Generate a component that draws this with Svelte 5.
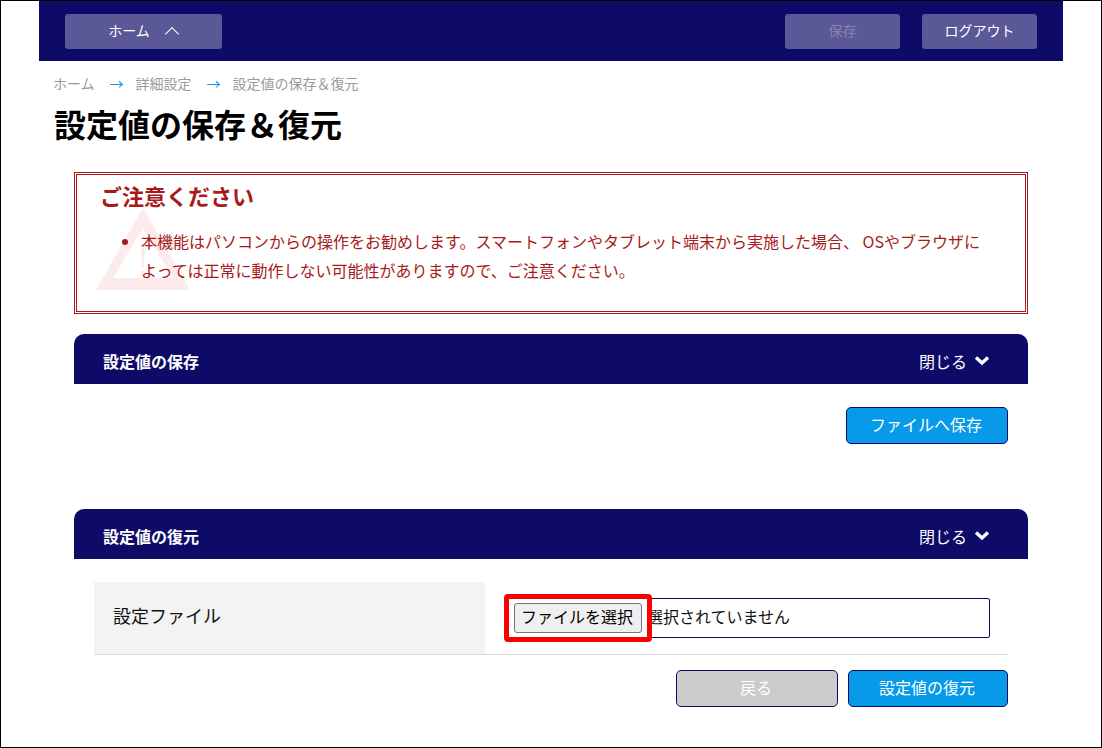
<script>
    let crumbs = ["ホーム", "詳細設定", "設定値の保存＆復元"];
</script>

<div class="frame">
    <div class="page">
        <header>
            <button class="nav home">ホーム<span class="up"></span></button>
            <div class="nav_right">
                <button class="nav disabled">保存</button>
                <button class="nav">ログアウト</button>
            </div>
        </header>

        <nav class="crumbs">
            {#each crumbs as crumb, index}
                {#if index > 0}<span class="arrow">→</span>{/if}
                <span>{crumb}</span>
            {/each}
        </nav>

        <h1>設定値の保存＆復元</h1>

        <div class="content">
            <section class="notice">
                <svg class="warn" width="94" height="82" viewBox="0 0 94 82">
                    <path fill-rule="evenodd" d="M47 0 L94 82 L0 82 Z M47 20 L17 70 L77 70 Z" fill="#fdeaea"/>
                    <path d="M44.5 37 L49 37 L47.6 60 L46 60 Z M45 63 H48.5 V68 H45 Z" fill="#fdeaea"/>
                </svg>
                <h2>ご注意ください</h2>
                <ul>
                    <li>本機能はパソコンからの操作をお勧めします。スマートフォンやタブレット端末から実施した場合、 OSやブラウザによっては正常に動作しない可能性がありますので、ご注意ください。</li>
                </ul>
            </section>

            <section class="panel save">
                <div class="panel_head">
                    <strong>設定値の保存</strong>
                    <span class="toggle">閉じる
                        <svg width="16" height="11" viewBox="0 0 16 11"><path d="M2 2.5 L8 8 L14 2.5" fill="none" stroke="#fff" stroke-width="3.4"/></svg>
                    </span>
                </div>
                <div class="actions first">
                    <button class="action">ファイルへ保存</button>
                </div>
            </section>

            <section class="panel">
                <div class="panel_head">
                    <strong>設定値の復元</strong>
                    <span class="toggle">閉じる
                        <svg width="16" height="11" viewBox="0 0 16 11"><path d="M2 2.5 L8 8 L14 2.5" fill="none" stroke="#fff" stroke-width="3.4"/></svg>
                    </span>
                </div>
                <div class="row">
                    <div class="label">設定ファイル</div>
                    <div class="value">
                        <div class="file">
                            <button class="choose">ファイルを選択</button>
                            <span class="file_text">選択されていません</span>
                            <span class="highlight"></span>
                        </div>
                    </div>
                </div>
                <div class="actions">
                    <button class="action back">戻る</button>
                    <button class="action">設定値の復元</button>
                </div>
            </section>
        </div>
    </div>
</div>

<style>
    :global(body) {
        background: white;
    }

    .frame {
        box-sizing: border-box;
        width: 1102px;
        height: 748px;
        border: 1px solid black;
        overflow: hidden;
        background: white;
        font-family: "Noto Sans CJK JP", "Liberation Sans", sans-serif;
    }

    .page {
        width: 1024px;
        margin-left: 38px;
    }

    header {
        display: flex;
        justify-content: space-between;
        align-items: center;
        height: 60px;
        padding: 0 26px;
        box-sizing: border-box;
        background: #0e0b68;
    }

    .nav_right {
        display: flex;
        gap: 22px;
    }

    button {
        font-family: inherit;
        cursor: pointer;
    }

    .nav {
        width: 115px;
        height: 35px;
        padding: 0 0 2px;
        border: none;
        border-radius: 3px;
        background: #5a5896;
        color: white;
        font-size: 14px;
    }

    .home {
        width: 157px;
    }

    .up {
        display: inline-block;
        width: 10px;
        height: 10px;
        margin: 0 2px 0 17px;
        box-sizing: border-box;
        border-left: 1.5px solid white;
        border-top: 1.5px solid white;
        transform: translateY(3px) rotate(45deg);
    }

    .disabled {
        color: #8583ae;
    }

    .crumbs {
        display: flex;
        align-items: center;
        height: 20px;
        margin-top: 12px;
        padding-left: 14px;
        color: #9a9a9a;
        font-size: 14px;
    }

    .crumbs span {
        line-height: 20px;
    }

    .arrow {
        margin: 0 12px 0 15px;
        color: #1b95e6;
        font-size: 14px;
    }

    h1 {
        margin: 8px 0 0 15px;
        height: 44px;
        font-size: 32px;
        line-height: 44px;
        font-weight: 700;
        color: black;
    }

    .content {
        padding: 27px 35px 0;
    }

    .notice {
        position: relative;
        box-sizing: border-box;
        height: 142px;
        padding: 6px 40px 0 23px;
        border: 3px double #a81a1a;
        color: #a81a1a;
    }

    .warn {
        position: absolute;
        left: 19px;
        top: 33px;
    }

    .notice h2 {
        position: relative;
        margin: 0;
        font-size: 22px;
        line-height: 28px;
        font-weight: 700;
    }

    .notice ul {
        position: relative;
        margin: 18px 0 0;
        padding-left: 41px;
        font-size: 16px;
        line-height: 28.5px;
    }

    .panel_head {
        display: flex;
        justify-content: space-between;
        align-items: center;
        height: 50px;
        padding: 3px 38px 0 29px;
        box-sizing: border-box;
        border-radius: 10px 10px 0 0;
        background: #0e0b68;
        color: white;
        font-size: 16px;
    }

    .panel_head strong {
        font-size: 16px;
    }

    .toggle {
        display: flex;
        align-items: center;
        gap: 7px;
    }

    .save {
        height: 175px;
        margin-top: 20px;
    }

    .actions {
        display: flex;
        justify-content: flex-end;
        gap: 10px;
        margin: 15px 20px 0;
    }

    .first {
        margin-top: 23px;
    }

    .action {
        width: 162px;
        height: 37px;
        padding: 0 2px 4px 0;
        border: 1px solid #0e0b68;
        border-radius: 5px;
        background: #079ae8;
        color: white;
        font-size: 16px;
    }

    .action:last-child {
        width: 160px;
    }

    .first .action:last-child {
        width: 162px;
    }

    .back {
        background: #cbcbcb;
    }

    .row {
        display: flex;
        height: 73px;
        margin: 23px 20px 0;
        border-bottom: 1px solid #dcdcdc;
        box-sizing: border-box;
    }

    .label {
        display: flex;
        align-items: center;
        width: 391px;
        padding: 0 0 6px 19px;
        box-sizing: border-box;
        background: #f3f3f3;
        color: #111;
        font-size: 18px;
    }

    .value {
        flex: 1;
        display: flex;
        align-items: center;
        padding-left: 20px;
    }

    .file {
        position: relative;
        display: flex;
        align-items: center;
        box-sizing: border-box;
        width: 485px;
        height: 40px;
        padding-left: 8px;
        border: 1px solid #0e0b68;
        border-radius: 2px;
        font-size: 16px;
        color: #111;
    }

    .choose {
        width: 128px;
        height: 30px;
        padding: 0 2px 4px 0;
        border: 1px solid #767676;
        border-radius: 3px;
        background: #efefef;
        color: black;
        font-size: 16px;
    }

    .file_text {
        margin: 0 0 4px 5px;
    }

    .highlight {
        position: absolute;
        left: -2px;
        top: -5px;
        width: 148px;
        height: 48px;
        box-sizing: border-box;
        border: 5px solid #fa0000;
        border-radius: 4px;
        pointer-events: none;
    }
</style>
